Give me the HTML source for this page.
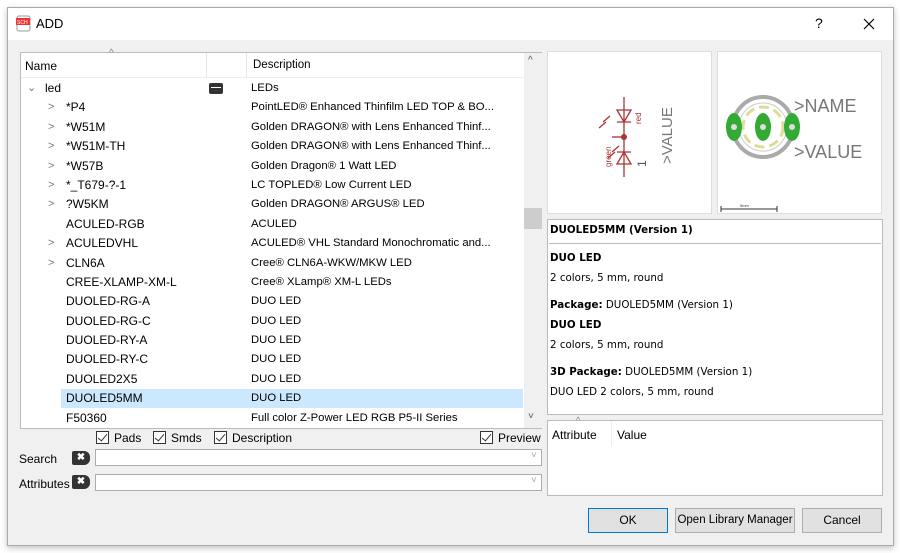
<!DOCTYPE html>
<html><head><meta charset="utf-8"><style>
*{margin:0;padding:0;box-sizing:border-box}
body{width:900px;height:553px;background:#fff;font-family:"Liberation Sans",sans-serif;font-size:12px;color:#000;position:relative;overflow:hidden}
.a{position:absolute}
.win{left:7px;top:7px;width:887px;height:539px;border:1px solid #aaa;background:#f0f0f0;box-shadow:0 2px 6px rgba(0,0,0,.25)}
.title{left:8px;top:8px;width:885px;height:32px;background:#fff}
.tree{left:20px;top:52px;width:522px;height:377px;background:#fff;border:1px solid #bbb}
.row{position:absolute;left:0;height:19px;line-height:19px;white-space:nowrap}
.n{position:absolute;left:45px}
.d{position:absolute;left:230px;font-size:11.3px}
.arr{position:absolute;left:27px;color:#777;font-size:11px}
.cb{display:inline-block;width:13px;height:13px;border:1px solid #333;background:#fff;vertical-align:-2px;position:relative;margin-right:5px}
.cb:after{content:"";position:absolute;left:3px;top:0px;width:4px;height:8px;border:solid #333;border-width:0 1px 1px 0;transform:rotate(40deg)}
.inp{background:#fff;border:1px solid #adadad;height:17px}
.xb{width:18px;height:14px;background:#333;border-radius:2px 6px 6px 2px;color:#fff;font-size:10px;font-weight:bold;text-align:center;line-height:14px}
.btn{border:1px solid #adadad;background:#e1e1e1;height:25px;line-height:23px;text-align:center;white-space:nowrap}
.info{font-family:"DejaVu Sans",sans-serif;font-size:10.3px;left:550px}
</style></head><body>
<div class="a win"></div>
<div class="a title"></div>
<svg class="a" style="left:16px;top:15px" width="16" height="18"><rect x="1" y="1" width="13" height="15" rx="2" fill="#fff" stroke="#999"/><rect x="0" y="3" width="14" height="7" fill="#e33"/><text x="1" y="9" font-size="5" fill="#fff" font-family="Liberation Sans">SCH</text></svg>
<div class="a" style="left:36px;top:16px;font-size:13px">ADD</div>
<div class="a" style="left:815px;top:15px;font-size:14px">?</div>
<svg class="a" style="left:863px;top:18px" width="12" height="12"><path d="M1 1L11 11M11 1L1 11" stroke="#000" stroke-width="1.2"/></svg>

<div class="a tree">
 <div class="a" style="left:0;top:0;width:503px;height:25px;border-bottom:1px solid #eee"></div>
 <div class="a" style="left:185px;top:0;width:1px;height:25px;background:#e5e5e5"></div>
 <div class="a" style="left:225px;top:0;width:1px;height:25px;background:#e5e5e5"></div>
 <div class="a" style="left:88px;top:-5px;color:#888;font-size:10px">^</div>
 <div class="a" style="left:4px;top:6px">Name</div>
 <div class="a" style="left:232px;top:6px;font-size:11.5px">Description</div>
 <div class="a" style="left:503px;top:0;width:18px;height:375px;background:#f0f0f0"></div>
 <div class="a" style="left:503px;top:155px;width:18px;height:21px;background:#cdcdcd"></div>
 <div class="a" style="left:507px;top:2px;color:#555;font-size:10px">^</div>
 <div class="a" style="left:507px;top:358px;color:#555;font-size:10px">˅</div>
 <div class="a" style="left:40px;top:336px;width:462px;height:19px;background:#cce8ff"></div>
 <div class="row" style="top:26px;width:500px"><span class="arr" style="left:6px">⌄</span><span class="n" style="left:24px">led</span><svg class="a" style="left:187px;top:4px" width="16" height="12"><rect x="1" y="0" width="14" height="11" rx="2" fill="#333"/><rect x="3" y="4" width="10" height="1" fill="#fff"/></svg><span class="d">LEDs</span></div>
 <div class="row" style="top:45px"><span class="arr">&gt;</span><span class="n">*P4</span><span class="d">PointLED® Enhanced Thinfilm LED TOP &amp; BO...</span></div>
 <div class="row" style="top:65px"><span class="arr">&gt;</span><span class="n">*W51M</span><span class="d">Golden DRAGON® with Lens Enhanced Thinf...</span></div>
 <div class="row" style="top:84px"><span class="arr">&gt;</span><span class="n">*W51M-TH</span><span class="d">Golden DRAGON® with Lens Enhanced Thinf...</span></div>
 <div class="row" style="top:104px"><span class="arr">&gt;</span><span class="n">*W57B</span><span class="d">Golden Dragon® 1 Watt LED</span></div>
 <div class="row" style="top:123px"><span class="arr">&gt;</span><span class="n">*_T679-?-1</span><span class="d">LC TOPLED® Low Current LED</span></div>
 <div class="row" style="top:142px"><span class="arr">&gt;</span><span class="n">?W5KM</span><span class="d">Golden DRAGON® ARGUS® LED</span></div>
 <div class="row" style="top:162px"><span class="n">ACULED-RGB</span><span class="d">ACULED</span></div>
 <div class="row" style="top:181px"><span class="arr">&gt;</span><span class="n">ACULEDVHL</span><span class="d">ACULED® VHL Standard Monochromatic and...</span></div>
 <div class="row" style="top:201px"><span class="arr">&gt;</span><span class="n">CLN6A</span><span class="d">Cree® CLN6A-WKW/MKW LED</span></div>
 <div class="row" style="top:220px"><span class="n">CREE-XLAMP-XM-L</span><span class="d">Cree® XLamp® XM-L LEDs</span></div>
 <div class="row" style="top:239px"><span class="n">DUOLED-RG-A</span><span class="d">DUO LED</span></div>
 <div class="row" style="top:259px"><span class="n">DUOLED-RG-C</span><span class="d">DUO LED</span></div>
 <div class="row" style="top:278px"><span class="n">DUOLED-RY-A</span><span class="d">DUO LED</span></div>
 <div class="row" style="top:297px"><span class="n">DUOLED-RY-C</span><span class="d">DUO LED</span></div>
 <div class="row" style="top:317px"><span class="n">DUOLED2X5</span><span class="d">DUO LED</span></div>
 <div class="row" style="top:336px"><span class="n">DUOLED5MM</span><span class="d">DUO LED</span></div>
 <div class="row" style="top:356px"><span class="n">F50360</span><span class="d">Full color Z-Power LED RGB P5-II Series</span></div>
</div>

<div class="a" style="left:96px;top:431px"><span class="cb"></span>Pads</div>
<div class="a" style="left:153px;top:431px"><span class="cb"></span>Smds</div>
<div class="a" style="left:214px;top:431px"><span class="cb"></span>Description</div>
<div class="a" style="left:480px;top:431px"><span class="cb"></span>Preview</div>
<div class="a" style="left:19px;top:452px">Search</div>
<div class="a xb" style="left:72px;top:451px">✖</div>
<div class="a inp" style="left:95px;top:449px;width:447px"></div>
<div class="a" style="left:531px;top:450px;color:#aaa;font-size:10px">˅</div>
<div class="a" style="left:19px;top:477px">Attributes</div>
<div class="a xb" style="left:72px;top:475px">✖</div>
<div class="a inp" style="left:95px;top:474px;width:447px"></div>
<div class="a" style="left:531px;top:475px;color:#aaa;font-size:10px">˅</div>

<div class="a" style="left:547px;top:51px;width:165px;height:163px;background:#fff;border:1px solid #ddd"></div>
<svg class="a" style="left:548px;top:52px" width="163" height="161">
 <g stroke="#a33" fill="none" stroke-width="1.3">
 <line x1="76" y1="45" x2="76" y2="125"/>
 <path d="M69 58 L83 58 L76 70 Z M69 70 L83 70"/>
 <path d="M69 112 L83 112 L76 100 Z M69 100 L83 100"/>
 <line x1="64" y1="85" x2="76" y2="85"/>
 <path d="M62 64 l-7 6 M58 70 l-7 6 M64 100 l7-6 M60 106 l7-6"/>
 </g>
 <circle cx="76" cy="85" r="3" fill="#a33"/>
 <text transform="translate(93,72) rotate(-90)" font-size="8" fill="#a33" font-family="Liberation Sans">red</text>
 <text transform="translate(63,115) rotate(-90)" font-size="8" fill="#a33" font-family="Liberation Sans">green</text>
 <text transform="translate(98,115) rotate(-90)" font-size="12" fill="#555" font-family="Liberation Sans">1</text>
 <text transform="translate(124,112) rotate(-90)" font-size="15" fill="#777" font-family="Liberation Sans">&gt;VALUE</text>
</svg>
<div class="a" style="left:717px;top:51px;width:165px;height:163px;background:#fff;border:1px solid #ddd"></div>
<svg class="a" style="left:718px;top:52px" width="163" height="161">
 <circle cx="45" cy="75" r="30" fill="none" stroke="#aaa" stroke-width="4"/>
 <circle cx="45" cy="75" r="24" fill="none" stroke="#ccc" stroke-width="1"/>
 <circle cx="45" cy="75" r="20" fill="none" stroke="#dd9" stroke-width="3" stroke-dasharray="10 5"/>
 <ellipse cx="16" cy="75" rx="8" ry="14" fill="#3a3"/>
 <ellipse cx="45" cy="75" rx="8" ry="14" fill="#3a3"/>
 <ellipse cx="74" cy="75" rx="8" ry="14" fill="#3a3"/>
 <circle cx="16" cy="75" r="3" fill="#ddd"/><circle cx="45" cy="75" r="3" fill="#ddd"/><circle cx="74" cy="75" r="3" fill="#ddd"/>
 <text x="76" y="60" font-size="18" fill="#777" font-family="Liberation Sans">&gt;NAME</text>
 <text x="76" y="106" font-size="18" fill="#777" font-family="Liberation Sans">&gt;VALUE</text>
 <path d="M3 157 H59 M3 154 v6 M59 154 v6" stroke="#333"/>
 <text x="22" y="155" font-size="4" fill="#333">5mm</text>
</svg>

<div class="a" style="left:547px;top:219px;width:336px;height:196px;background:#fff;border:1px solid #bbb"></div>
<div class="a" style="left:549px;top:243px;width:332px;height:1px;background:#bbb"></div>
<div class="a info" style="top:224px;font-weight:bold">DUOLED5MM (Version 1)</div>
<div class="a info" style="top:252px;font-weight:bold">DUO LED</div>
<div class="a info" style="top:272px">2 colors, 5 mm, round</div>
<div class="a info" style="top:299px"><b>Package:</b> DUOLED5MM (Version 1)</div>
<div class="a info" style="top:319px;font-weight:bold">DUO LED</div>
<div class="a info" style="top:339px">2 colors, 5 mm, round</div>
<div class="a info" style="top:366px"><b>3D Package:</b> DUOLED5MM (Version 1)</div>
<div class="a info" style="top:386px">DUO LED 2 colors, 5 mm, round</div>

<div class="a" style="left:547px;top:420px;width:336px;height:76px;background:#fff;border:1px solid #bbb"></div>
<div class="a" style="left:611px;top:421px;width:1px;height:25px;background:#eee"></div>
<div class="a" style="left:576px;top:415px;color:#888;font-size:9px">^</div>
<div class="a" style="left:552px;top:428px">Attribute</div>
<div class="a" style="left:617px;top:428px">Value</div>

<div class="a btn" style="left:588px;top:508px;width:80px;border:1px solid #0078d7">OK</div>
<div class="a btn" style="left:675px;top:508px;width:120px;font-size:11.5px">Open Library Manager</div>
<div class="a btn" style="left:802px;top:508px;width:80px">Cancel</div>
</body></html>
